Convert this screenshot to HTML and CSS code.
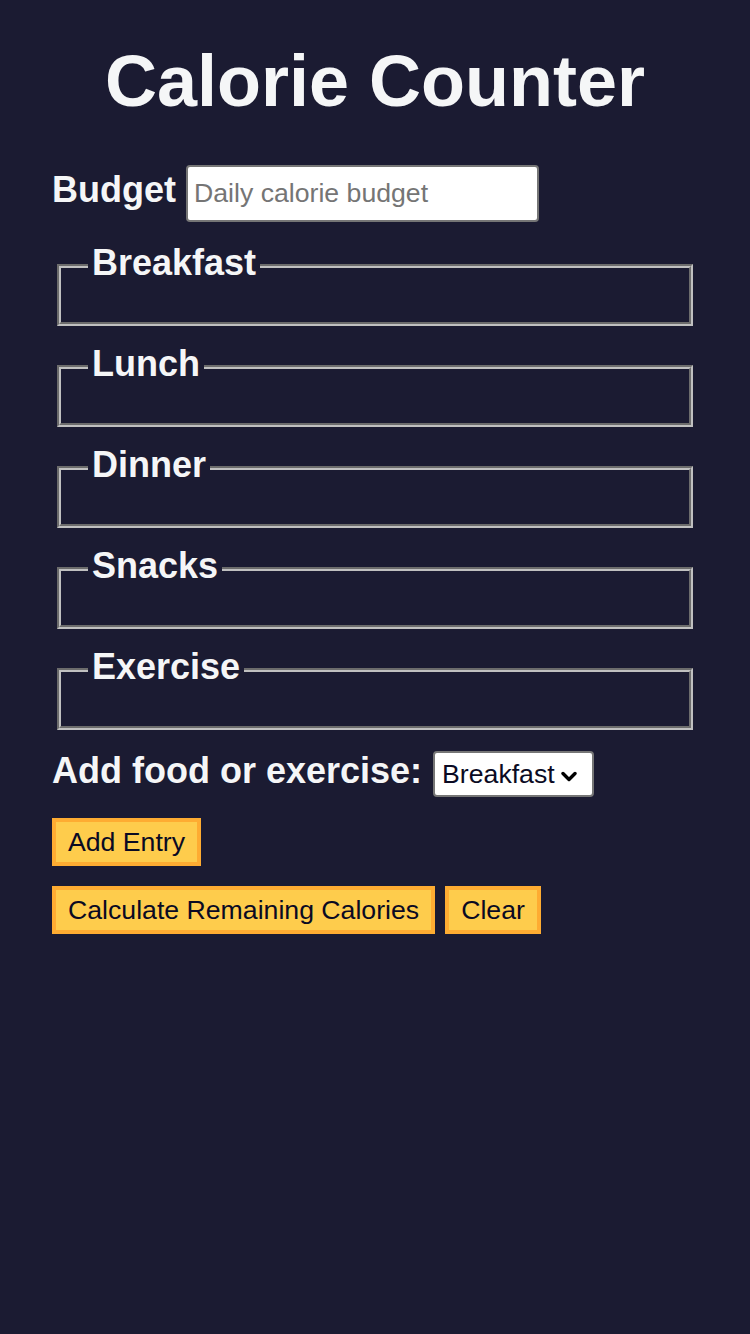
FILE: index.html
```html
<!DOCTYPE html>
<html lang="en">
<head>
<meta charset="utf-8">
<title>Calorie Counter</title>
<link rel="stylesheet" href="styles.css">
</head>
<body>
<main class="container">
  <h1 class="title">Calorie Counter</h1>
  <form class="calorie-form">
    <div class="budget-row">
      <label class="label" for="budget">Budget</label>
      <input class="text-input" type="number" id="budget" placeholder="Daily calorie budget">
    </div>
    <fieldset class="meal"><legend class="meal-legend">Breakfast</legend></fieldset>
    <fieldset class="meal"><legend class="meal-legend">Lunch</legend></fieldset>
    <fieldset class="meal"><legend class="meal-legend">Dinner</legend></fieldset>
    <fieldset class="meal"><legend class="meal-legend">Snacks</legend></fieldset>
    <fieldset class="meal"><legend class="meal-legend">Exercise</legend></fieldset>
    <div class="entry-row">
      <label class="label" for="entry-dropdown">Add food or exercise:</label>
      <span class="select-wrap">
        <select class="select" id="entry-dropdown">
          <option>Breakfast</option>
          <option>Lunch</option>
          <option>Dinner</option>
          <option>Snacks</option>
          <option>Exercise</option>
        </select>
        <svg class="chevron" width="16" height="11" viewBox="0 0 16 11" aria-hidden="true"><path d="M2 2.5 L8 8.5 L14 2.5" fill="none" stroke="#000" stroke-width="3.4" stroke-linecap="round" stroke-linejoin="round"/></svg>
      </span>
    </div>
    <div class="button-row">
      <button type="button" class="btn">Add Entry</button>
    </div>
    <div class="button-row">
      <button type="submit" class="btn">Calculate Remaining Calories</button>
      <button type="button" class="btn">Clear</button>
    </div>
  </form>
</main>
</body>
</html>
```

FILE: styles.css
```css
* {
  box-sizing: border-box;
}

html, body {
  margin: 0;
  padding: 0;
}

body {
  background-color: #1b1b32;
  color: #f5f6f7;
  font-family: "Liberation Sans", Arial, Helvetica, sans-serif;
  font-size: 36px;
  min-height: 1334px;
}

.container {
  width: 646px;
  margin: 0 auto;
  padding-top: 40px;
}

.title {
  margin: 0;
  font-size: 72px;
  line-height: 83px;
  font-weight: bold;
  text-align: center;
}

.calorie-form {
  display: flex;
  flex-direction: column;
  margin-top: 42px;
}

.label {
  font-weight: bold;
  line-height: 41px;
}

.budget-row {
  display: flex;
  align-items: baseline;
  gap: 10px;
  margin-bottom: 23px;
}

.text-input {
  width: 353px;
  height: 57px;
  padding: 0 6px;
  border: 2px solid #767676;
  border-radius: 4px;
  background: #fff;
  color: #0a0a23;
  font-family: "Liberation Sans", Arial, sans-serif;
  font-size: 26.67px;
}

.text-input::placeholder {
  color: #757575;
}

.meal {
  margin: 0 5px 20px;
  padding: 13px 27px 23px;
  border: 4px groove #c0c0c0;
  min-width: 0;
}

.meal-legend {
  padding: 0 4px 5px;
  font-size: 36px;
  line-height: 36px;
  font-weight: bold;
}

.entry-row {
  display: flex;
  align-items: baseline;
  gap: 11px;
}

.select-wrap {
  position: relative;
  display: inline-flex;
}

.select {
  appearance: none;
  -webkit-appearance: none;
  width: 161px;
  height: 46px;
  padding: 0 30px 0 7px;
  border: 2px solid #767676;
  border-radius: 4px;
  background: #fff;
  color: #0a0a23;
  font-family: "Liberation Sans", Arial, sans-serif;
  font-size: 26.67px;
}

.chevron {
  position: absolute;
  right: 17px;
  top: 20px;
  pointer-events: none;
}

.button-row {
  display: flex;
  gap: 10px;
  margin-top: 21px;
}

.button-row + .button-row {
  margin-top: 20px;
}

.btn {
  height: 48px;
  padding: 0 12px;
  border: 4px solid #feac32;
  border-radius: 0;
  background-color: #fecc4c;
  color: #0a0a23;
  font-family: "Liberation Sans", Arial, sans-serif;
  font-size: 26.67px;
  cursor: pointer;
}
```
